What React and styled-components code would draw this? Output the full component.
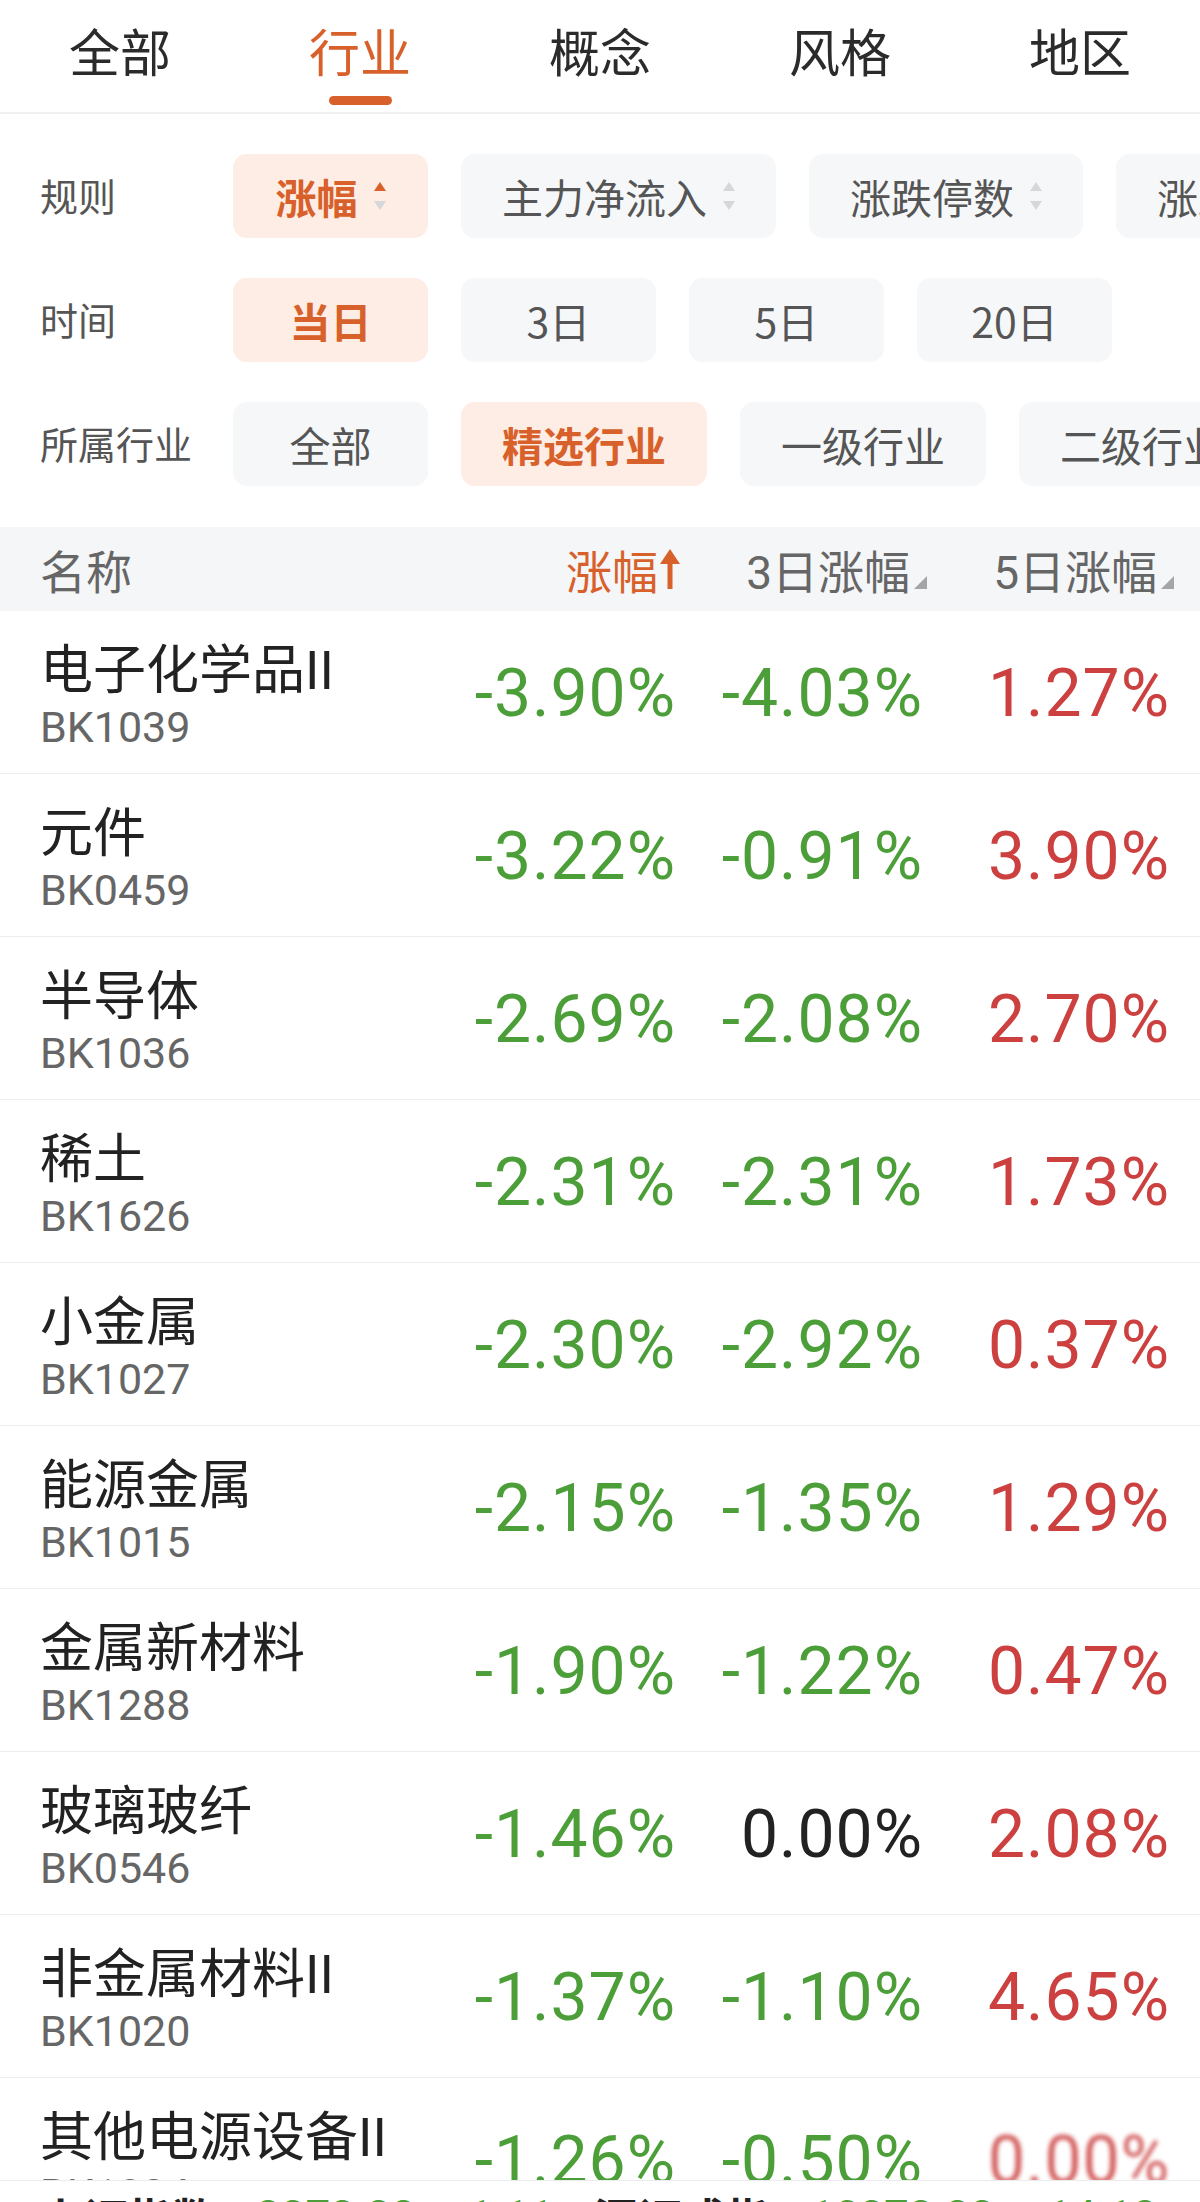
import styled, { createGlobalStyle } from 'styled-components';

const ORANGE = '#d8612b';
const GREEN = '#4c9e39';
const RED = '#cc4040';

const GlobalStyle = createGlobalStyle`
  html, body {
    margin: 0;
    padding: 0;
    background: #ffffff;
  }
  body {
    font-family: Roboto, "Noto Sans CJK SC", "Noto Sans", sans-serif;
  }
`;

const tabs = ['全部', '行业', '概念', '风格', '地区'];

const filters = [
  {
    label: '规则',
    chips: [
      { text: '涨幅', active: true, sort: true },
      { text: '主力净流入', sort: true },
      { text: '涨跌停数', sort: true },
      { text: '涨跌家数', sort: true },
    ],
  },
  {
    label: '时间',
    chips: [{ text: '当日', active: true }, { text: '3日' }, { text: '5日' }, { text: '20日' }],
  },
  {
    label: '所属行业',
    chips: [{ text: '全部' }, { text: '精选行业', active: true }, { text: '一级行业' }, { text: '二级行业' }],
  },
];

const rows = [
  { name: '电子化学品II', code: 'BK1039', v: ['-3.90%', '-4.03%', '1.27%'] },
  { name: '元件', code: 'BK0459', v: ['-3.22%', '-0.91%', '3.90%'] },
  { name: '半导体', code: 'BK1036', v: ['-2.69%', '-2.08%', '2.70%'] },
  { name: '稀土', code: 'BK1626', v: ['-2.31%', '-2.31%', '1.73%'] },
  { name: '小金属', code: 'BK1027', v: ['-2.30%', '-2.92%', '0.37%'] },
  { name: '能源金属', code: 'BK1015', v: ['-2.15%', '-1.35%', '1.29%'] },
  { name: '金属新材料', code: 'BK1288', v: ['-1.90%', '-1.22%', '0.47%'] },
  { name: '玻璃玻纤', code: 'BK0546', v: ['-1.46%', '0.00%', '2.08%'] },
  { name: '非金属材料II', code: 'BK1020', v: ['-1.37%', '-1.10%', '4.65%'] },
  { name: '其他电源设备II', code: 'BK1034', v: ['-1.26%', '-0.50%', '0.00%'], blurLast: true },
];

function toneOf(value) {
  if (value.startsWith('-')) return 'down';
  if (parseFloat(value) === 0) return 'flat';
  return 'up';
}

function SortIcon({ active }) {
  return (
    <svg width="12" height="32" viewBox="0 0 12 32">
      <polygon points="6,2 12,11 0,11" fill={active ? ORANGE : '#d5d7db'} />
      <polygon points="0,21 12,21 6,30" fill="#d5d7db" />
    </svg>
  );
}

function CornerIcon() {
  return (
    <svg width="13" height="13" viewBox="0 0 13 13">
      <polygon points="13,0 13,13 0,13" fill="#a5a5a5" />
    </svg>
  );
}

function UpArrow() {
  return (
    <svg width="20" height="40" viewBox="0 0 20 40">
      <path d="M10 6 L10 40" stroke={ORANGE} strokeWidth="5" />
      <polygon points="10,0 20,15 0,15" fill={ORANGE} />
    </svg>
  );
}

export default function App() {
  return (
    <Page>
      <GlobalStyle />
      <TabBar>
        {tabs.map((t) => (
          <Tab key={t} $active={t === '行业'}>
            <TabText>{t}</TabText>
            <Indicator $show={t === '行业'} />
          </Tab>
        ))}
      </TabBar>

      <Filters>
        {filters.map((f) => (
          <FilterRow key={f.label}>
            <FilterLabel>{f.label}</FilterLabel>
            <ChipList>
              {f.chips.map((c) => (
                <Chip key={c.text} $active={c.active}>
                  {c.text}
                  {c.sort && (
                    <SortWrap>
                      <SortIcon active={c.active} />
                    </SortWrap>
                  )}
                </Chip>
              ))}
            </ChipList>
          </FilterRow>
        ))}
      </Filters>

      <HeaderRow>
        <HeadName>名称</HeadName>
        <HeadCell $active>
          涨幅
          <ArrowWrap>
            <UpArrow />
          </ArrowWrap>
        </HeadCell>
        <HeadCell>
          3日涨幅
          <CornerWrap>
            <CornerIcon />
          </CornerWrap>
        </HeadCell>
        <HeadCell>
          5日涨幅
          <CornerWrap>
            <CornerIcon />
          </CornerWrap>
        </HeadCell>
      </HeaderRow>

      <List>
        {rows.map((r) => (
          <Row key={r.code}>
            <NameBox>
              <Name>{r.name}</Name>
              <Code>{r.code}</Code>
            </NameBox>
            {r.v.map((val, i) => (
              <Value key={i} $tone={toneOf(val)} $blur={r.blurLast && i === 2}>
                {val}
              </Value>
            ))}
          </Row>
        ))}
      </List>

      <IndexBar>
        <IndexName>上证指数</IndexName>
        <IndexNum>3373.33</IndexNum>
        <IndexNum>-1.11</IndexNum>
        <IndexName>深证成指</IndexName>
        <IndexNum>10373.33</IndexNum>
        <IndexNum>-14.18</IndexNum>
      </IndexBar>
    </Page>
  );
}

const Page = styled.div`
  width: 1200px;
  height: 2202px;
  display: flex;
  flex-direction: column;
  overflow: hidden;
  background: #fff;
`;

const TabBar = styled.div`
  display: grid;
  grid-template-columns: repeat(5, 1fr);
  height: 112px;
  border-bottom: 2px solid #f0f0f2;
  flex-shrink: 0;
`;

const Tab = styled.div`
  display: flex;
  flex-direction: column;
  align-items: center;
  padding-top: 19px;
  color: ${(p) => (p.$active ? ORANGE : '#2b2b2b')};
`;

const TabText = styled.span`
  font-family: "Noto Sans CJK SC", sans-serif;
  font-size: 51px;
  line-height: 62px;
`;

const Indicator = styled.div`
  width: 63px;
  height: 9px;
  margin-top: 15px;
  border-radius: 5px;
  background: ${(p) => (p.$show ? ORANGE : 'transparent')};
`;

const Filters = styled.div`
  display: flex;
  flex-direction: column;
  gap: 40px;
  padding: 40px 0 41px 40px;
  flex-shrink: 0;
`;

const FilterRow = styled.div`
  display: flex;
  align-items: center;
  height: 84px;
  overflow: hidden;
`;

const FilterLabel = styled.div`
  width: 193px;
  flex-shrink: 0;
  font-family: "Noto Sans CJK SC", sans-serif;
  font-size: 38px;
  color: #555;
  margin-top: -3px;
`;

const ChipList = styled.div`
  display: flex;
  gap: 33px;
  white-space: nowrap;
`;

const Chip = styled.div`
  flex-shrink: 0;
  display: flex;
  align-items: center;
  justify-content: center;
  box-sizing: border-box;
  min-width: 195px;
  height: 84px;
  padding: 0 41px;
  border-radius: 14px;
  font-family: "Noto Sans CJK SC", sans-serif;
  font-size: 41px;
  font-weight: ${(p) => (p.$active ? 700 : 400)};
  background: ${(p) => (p.$active ? '#fdede5' : '#f6f7f9')};
  color: ${(p) => (p.$active ? ORANGE : '#555')};
`;

const SortWrap = styled.span`
  display: flex;
  margin-left: 16px;
`;

const HeaderRow = styled.div`
  display: grid;
  grid-template-columns: 1fr 247px 247px 247px;
  align-items: center;
  height: 84px;
  padding: 0 30px 0 40px;
  background: #f5f6f8;
  flex-shrink: 0;
  font-family: Roboto, "Noto Sans CJK SC", sans-serif;
  font-size: 46px;
  color: #666;
`;

const HeadName = styled.div``;

const HeadCell = styled.div`
  display: flex;
  justify-content: flex-end;
  align-items: center;
  margin-right: -4px;
  color: ${(p) => (p.$active ? ORANGE : '#666')};
`;

const ArrowWrap = styled.span`
  display: flex;
  margin-left: 2px;
`;

const CornerWrap = styled.span`
  display: flex;
  align-self: flex-end;
  margin: 0 0 13px 4px;
`;

const List = styled.div`
  flex: 1;
  overflow: hidden;
`;

const Row = styled.div`
  display: grid;
  grid-template-columns: 1fr 247px 247px 247px;
  align-items: center;
  height: 162px;
  padding: 0 30px 0 40px;
  border-bottom: 1px solid #ededef;
`;

const NameBox = styled.div`
  display: flex;
  flex-direction: column;
  align-self: start;
  padding-top: 31px;
`;

const Name = styled.div`
  font-family: Roboto, "Noto Sans CJK SC", sans-serif;
  font-size: 53px;
  line-height: 58px;
  color: #222;
  white-space: nowrap;
`;

const Code = styled.div`
  font-family: Roboto, sans-serif;
  font-size: 43px;
  line-height: 54px;
  color: #666;
`;

const Value = styled.div`
  text-align: right;
  margin-top: 2px;
  font-family: Roboto, sans-serif;
  font-size: 66px;
  letter-spacing: 1px;
  color: ${(p) => (p.$tone === 'down' ? GREEN : p.$tone === 'up' ? RED : '#222')};
  ${(p) =>
    p.$blur &&
    `
    color: ${RED};
    filter: blur(2px);
    opacity: 0.85;
  `}
`;

const IndexBar = styled.div`
  height: 22px;
  flex-shrink: 0;
  display: flex;
  align-items: flex-start;
  gap: 40px;
  padding: 0 40px;
  border-top: 1px solid #ececee;
  overflow: hidden;
  box-sizing: border-box;
`;

const IndexName = styled.span`
  font-family: "Noto Sans CJK SC", sans-serif;
  font-size: 44px;
  line-height: 60px;
  font-weight: 700;
  color: #222;
  margin-top: 6px;
`;

const IndexNum = styled.span`
  font-family: Roboto, sans-serif;
  font-size: 44px;
  line-height: 60px;
  color: ${GREEN};
  margin-top: 6px;
`;
